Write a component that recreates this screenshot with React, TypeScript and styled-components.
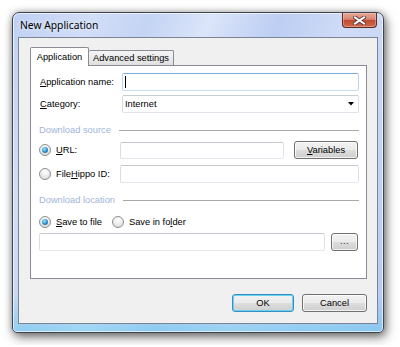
import React from "react";
import styled, { createGlobalStyle, css } from "styled-components";

const GlobalStyle = createGlobalStyle`
  html, body { margin: 0; padding: 0; background: #ffffff; }
  body {
    font-family: "Liberation Sans", Arial, sans-serif;
    font-size: 9.3px;
    color: #000;
  }
  * { box-sizing: border-box; }
`;

const Page = styled.div`
  padding: 12px;
`;

const Window = styled.div`
  width: 372px;
  height: 321px;
  border: 1px solid #3e4552;
  border-radius: 7px 7px 5px 5px;
  padding-bottom: 8px;
  display: flex;
  flex-direction: column;
  background:
    linear-gradient(to bottom, rgba(120, 210, 245, 0) 88%, rgba(100, 200, 240, 0.55) 100%),
    linear-gradient(112deg, #bfd0f3 0%, #d2ddf7 16%, #c4d4f4 28%, #dbe5fa 40%, #bdcef3 54%, #d0dcf7 68%, #c3d3f4 84%, #b4c8f2 100%);
  box-shadow:
    inset 0 0 0 1px rgba(255, 255, 255, 0.65),
    2px 4px 11px rgba(0, 0, 0, 0.55),
    0 0 6px rgba(0, 0, 0, 0.25);
`;

const TitleBar = styled.div`
  height: 24px;
  display: flex;
  justify-content: space-between;
  align-items: flex-start;
  padding: 0 6px 0 7px;
`;

const Title = styled.div`
  align-self: center;
  font-family: "Noto Sans", "Open Sans", sans-serif;
  font-size: 10.3px;
  color: #000;
  text-shadow: 0 0 5px rgba(255, 255, 255, 0.95);
`;

const CloseButton = styled.div`
  width: 35px;
  height: 15px;
  border: 1px solid #5e2b24;
  border-top: none;
  border-radius: 0 0 4px 4px;
  display: flex;
  align-items: center;
  justify-content: center;
  background: linear-gradient(to bottom, #e6a898 0%, #d88672 45%, #c24a30 52%, #cd6a4f 100%);
  box-shadow: inset 0 0 0 1px rgba(255, 200, 190, 0.45);
`;

const Client = styled.div`
  flex: 1;
  margin: 0 5px;
  border: 1px solid #7c8595;
  background: #f0f0f0;
  padding: 9px 10px 11px 11px;
  display: flex;
  flex-direction: column;
`;

const TabStrip = styled.div`
  display: flex;
  align-items: flex-end;
  height: 19px;
  margin-bottom: -1px;
  position: relative;
  z-index: 1;
`;

const Tab = styled.div<{ $active?: boolean; $w: number }>`
  width: ${(p) => p.$w}px;
  display: flex;
  align-items: center;
  justify-content: center;
  border: 1px solid #898c95;
  border-bottom: none;
  border-radius: 2px 2px 0 0;
  white-space: nowrap;
  ${(p) =>
    p.$active
      ? css`
          height: 19px;
          background: #ffffff;
        `
      : css`
          height: 15px;
          margin-bottom: 1px;
          border-left: none;
          background: linear-gradient(to bottom, #f4f4f4 0%, #ebebeb 50%, #dfdfdf 100%);
        `}
`;

const Panel = styled.div`
  height: 214px;
  border: 1px solid #898c95;
  background: #ffffff;
  padding: 7px 7px 0 8px;
  display: flex;
  flex-direction: column;
`;

const Row = styled.div<{ $mt?: number; $h?: number }>`
  display: flex;
  align-items: center;
  height: ${(p) => p.$h ?? 18}px;
  margin-top: ${(p) => p.$mt ?? 0}px;
`;

const Label = styled.div`
  width: 83px;
  padding-left: 1px;
  white-space: nowrap;
`;

const Mn = styled.span`
  text-decoration: underline;
  text-underline-offset: 1px;
`;

const TextBox = styled.div<{ $focused?: boolean; $h?: number }>`
  flex: 1;
  height: ${(p) => p.$h ?? 18}px;
  border: 1px solid;
  border-color: #c3c7cd #dfe3e8 #e3e8ee #dbdfe5;
  border-radius: 2px;
  background: #ffffff;
  display: flex;
  align-items: center;
  padding-left: 2px;
  ${(p) =>
    p.$focused &&
    css`
      border-color: #7aaede #b9d5ef #c6ddf1 #b9d5ef;
    `}
`;

const Caret = styled.span`
  width: 1px;
  height: 12px;
  background: #000;
`;

const SelectBox = styled.div`
  flex: 1;
  height: 18px;
  border: 1px solid;
  border-color: #c9cdd2 #dde1e6 #e0e4ea #d8dce2;
  border-radius: 2px;
  background: #ffffff;
  display: flex;
  align-items: center;
  justify-content: space-between;
  padding: 0 4px 0 2px;
`;

const GroupHeader = styled.div<{ $mt: number }>`
  display: flex;
  align-items: center;
  height: 12px;
  margin-top: ${(p) => p.$mt}px;
  color: #a2b4d9;
  white-space: nowrap;
`;

const GroupLine = styled.div`
  flex: 1;
  height: 1px;
  margin-left: 8px;
  background: #a9a9a9;
`;

const RadioOption = styled.div<{ $w?: number }>`
  display: flex;
  align-items: center;
  gap: 5px;
  white-space: nowrap;
  ${(p) => (p.$w ? `width: ${p.$w}px;` : "")}
`;

const Radio = styled.span<{ $checked?: boolean }>`
  width: 12px;
  height: 12px;
  border-radius: 50%;
  border: 1px solid #8c8e91;
  background: radial-gradient(circle at 50% 30%, #ffffff 0%, #f0f0f0 40%, #d2d2d2 100%);
  display: flex;
  align-items: center;
  justify-content: center;
  flex-shrink: 0;
  ${(p) =>
    p.$checked &&
    css`
      &::after {
        content: "";
        width: 6px;
        height: 6px;
        border-radius: 50%;
        background: radial-gradient(circle at 40% 35%, #a8ecff 0%, #3a9ad8 45%, #0f4f8c 100%);
      }
    `}
`;

const Button = styled.div<{ $w: number; $default?: boolean; $ml?: number; $mr?: number }>`
  width: ${(p) => p.$w}px;
  height: 18px;
  margin-left: ${(p) => p.$ml ?? 0}px;
  margin-right: ${(p) => p.$mr ?? 0}px;
  border: 1px solid #707070;
  border-radius: 3px;
  display: flex;
  align-items: center;
  justify-content: center;
  flex-shrink: 0;
  background: linear-gradient(to bottom, #f2f2f2 0%, #ebebeb 48%, #dddddd 52%, #cfcfcf 100%);
  box-shadow: inset 0 0 0 1px rgba(255, 255, 255, 0.75);
  white-space: nowrap;
  ${(p) =>
    p.$default &&
    css`
      border-color: #3c8cc0;
      box-shadow: inset 0 0 0 1px #62d4f6;
    `}
`;

const Dots = styled.span`
  letter-spacing: 0.5px;
  color: #333;
  margin-top: -2px;
`;

const ButtonBar = styled.div`
  display: flex;
  justify-content: flex-end;
  gap: 8px;
  margin-top: 15px;
`;

const CloseGlyph = () => (
  <svg width="13" height="9" viewBox="0 0 13 9">
    <path d="M2 1.5 L11 7.5 M11 1.5 L2 7.5" stroke="#5a3a36" strokeWidth="3.8" strokeLinecap="square" />
    <path d="M2 1.5 L11 7.5 M11 1.5 L2 7.5" stroke="#ffffff" strokeWidth="2" strokeLinecap="square" />
  </svg>
);

const DropArrow = () => (
  <svg width="6" height="4" viewBox="0 0 6 4">
    <path d="M0 0 H6 L3 3.5 Z" fill="#000" />
  </svg>
);

export default function App() {
  return (
    <>
      <GlobalStyle />
      <Page>
        <Window>
          <TitleBar>
            <Title>New Application</Title>
            <CloseButton>
              <CloseGlyph />
            </CloseButton>
          </TitleBar>
          <Client>
            <TabStrip>
              <Tab $active $w={59}>Application</Tab>
              <Tab $w={85}>Advanced settings</Tab>
            </TabStrip>
            <Panel>
              <Row>
                <Label>
                  <Mn>A</Mn>pplication name:
                </Label>
                <TextBox $focused>
                  <Caret />
                </TextBox>
              </Row>
              <Row $mt={4}>
                <Label>
                  <Mn>C</Mn>ategory:
                </Label>
                <SelectBox>
                  <span>Internet</span>
                  <DropArrow />
                </SelectBox>
              </Row>

              <GroupHeader $mt={11}>
                Download source
                <GroupLine />
              </GroupHeader>
              <Row $mt={5}>
                <RadioOption $w={81}>
                  <Radio $checked />
                  <span>
                    <Mn>U</Mn>RL:
                  </span>
                </RadioOption>
                <TextBox $h={17} />
                <Button $w={64} $ml={10} $mr={1}>
                  <span>
                    <Mn>V</Mn>ariables
                  </span>
                </Button>
              </Row>
              <Row $mt={6}>
                <RadioOption $w={81}>
                  <Radio />
                  <span>
                    File<Mn>H</Mn>ippo ID:
                  </span>
                </RadioOption>
                <TextBox />
              </Row>

              <GroupHeader $mt={11}>
                Download location
                <GroupLine />
              </GroupHeader>
              <Row $mt={9} $h={14}>
                <RadioOption $w={73}>
                  <Radio $checked />
                  <span>
                    <Mn>S</Mn>ave to file
                  </span>
                </RadioOption>
                <RadioOption>
                  <Radio />
                  <span>
                    Save in fo<Mn>l</Mn>der
                  </span>
                </RadioOption>
              </Row>
              <Row $mt={4}>
                <TextBox />
                <Button $w={27} $ml={6} $mr={1}>
                  <Dots>...</Dots>
                </Button>
              </Row>
            </Panel>
            <ButtonBar>
              <Button $w={62} $default>
                OK
              </Button>
              <Button $w={65}>Cancel</Button>
            </ButtonBar>
          </Client>
        </Window>
      </Page>
    </>
  );
}
